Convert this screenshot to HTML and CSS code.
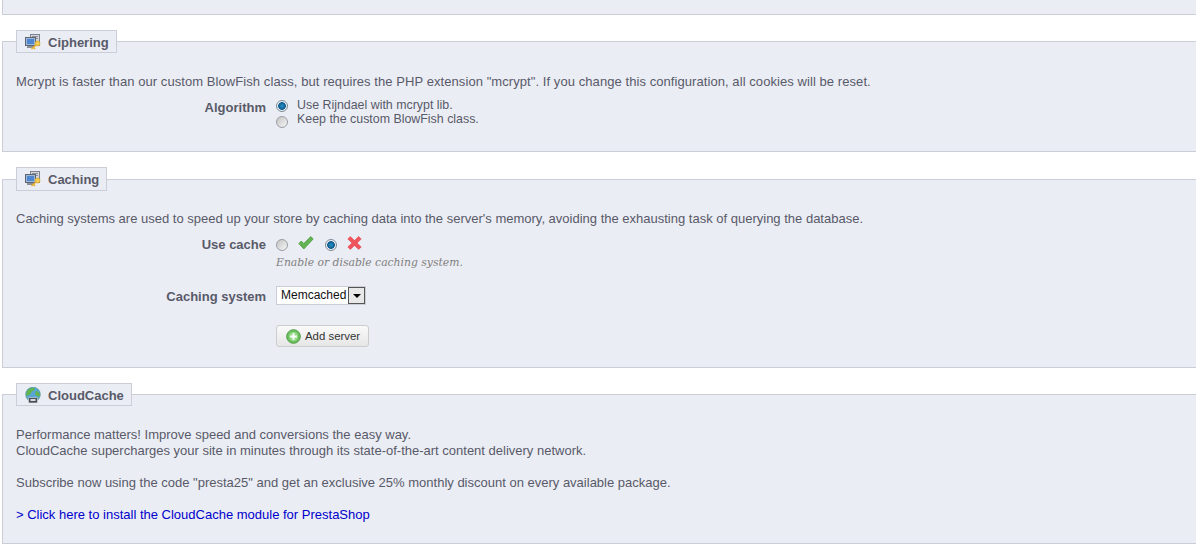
FILE: index.html
```html
<!DOCTYPE html>
<html lang="en">
<head>
    <meta charset="UTF-8">
    <meta name="viewport" content="width=device-width, initial-scale=1.0">
    <title>Performance</title>
    <link rel="stylesheet" href="styles.css">
</head>
<body>
    <div class="panel-stub"></div>

    <fieldset class="panel panel-cipher">
        <legend>
            <svg class="legend-icon" width="16" height="16" viewBox="0 0 16 16">
                <rect x="5.500" y="0.500" width="9" height="11" fill="#d5d7dc" stroke="#7d8290"/>
                <rect x="7" y="2" width="6" height="1" fill="#8a8f9a"/>
                <rect x="7" y="4" width="6" height="1" fill="#8a8f9a"/>
                <rect x="0.500" y="3.500" width="10" height="8" fill="#9fb8da" stroke="#5d6472"/>
                <rect x="2" y="5" width="7" height="5" fill="#4f86d0"/>
                <rect x="2" y="12" width="7" height="2" fill="#8a8f9a"/>
                <circle cx="12.500" cy="9.500" r="2.500" fill="#f5cd50" stroke="#d09a20" stroke-width="0.600"/>
                <path d="M11 11 L6.500 15 M8.500 13.300 L10 15" stroke="#e6b02c" stroke-width="1.600" fill="none"/>
            </svg>
            Ciphering
        </legend>
        <p class="intro intro-cipher">Mcrypt is faster than our custom BlowFish class, but requires the PHP extension "mcrypt". If you change this configuration, all cookies will be reset.</p>
        <div class="form-row">
            <label class="form-label">Algorithm</label>
            <div class="form-field algo-list">
                <div class="radio-line"><span class="radio checked"></span>Use Rijndael with mcrypt lib.</div>
                <div class="radio-line"><span class="radio radio-low"></span>Keep the custom BlowFish class.</div>
            </div>
        </div>
    </fieldset>

    <fieldset class="panel panel-cache">
        <legend>
            <svg class="legend-icon" width="16" height="16" viewBox="0 0 16 16">
                <rect x="5.500" y="0.500" width="9" height="11" fill="#d5d7dc" stroke="#7d8290"/>
                <rect x="7" y="2" width="6" height="1" fill="#8a8f9a"/>
                <rect x="7" y="4" width="6" height="1" fill="#8a8f9a"/>
                <rect x="0.500" y="3.500" width="10" height="8" fill="#9fb8da" stroke="#5d6472"/>
                <rect x="2" y="5" width="7" height="5" fill="#4f86d0"/>
                <rect x="2" y="12" width="7" height="2" fill="#8a8f9a"/>
                <circle cx="12.500" cy="9.500" r="2.500" fill="#f5cd50" stroke="#d09a20" stroke-width="0.600"/>
                <path d="M11 11 L6.500 15 M8.500 13.300 L10 15" stroke="#e6b02c" stroke-width="1.600" fill="none"/>
            </svg>
            Caching
        </legend>
        <p class="intro">Caching systems are used to speed up your store by caching data into the server's memory, avoiding the exhausting task of querying the database.</p>
        <div class="form-row row-use-cache">
            <label class="form-label">Use cache</label>
            <div class="form-field">
                <div class="toggle-line">
                    <span class="radio"></span>
                    <svg class="toggle-icon" width="16" height="14" viewBox="0 0 16 14">
                        <path d="M0.800 7.500 L3.300 5 L5.800 7.500 L12.800 0.600 L15.200 3 L5.800 13 Z" fill="#62b550" stroke="#3f8f38" stroke-width="0.700"/>
                    </svg>
                    <span class="radio checked"></span>
                    <svg class="toggle-icon" width="15" height="14" viewBox="0 0 15 14">
                        <path d="M0.800 3 L3.300 0.600 L7.500 4.500 L11.700 0.600 L14.200 3 L10 7 L14.200 11 L11.700 13.400 L7.500 9.500 L3.300 13.400 L0.800 11 L5 7 Z" fill="#f0545c" stroke="#e0444c" stroke-width="0.600"/>
                    </svg>
                </div>
                <p class="hint">Enable or disable caching system.</p>
            </div>
        </div>
        <div class="form-row row-system">
            <label class="form-label">Caching system</label>
            <div class="form-field">
                <div class="fake-select">
                    <span class="fake-select-value">Memcached</span>
                    <span class="fake-select-arrow"></span>
                </div>
            </div>
        </div>
        <div class="form-row">
            <div class="form-label"></div>
            <div class="form-field">
                <button class="btn-add" type="button">
                    <svg width="15" height="15" viewBox="0 0 16 16">
                        <circle cx="8" cy="8" r="7.300" fill="#6cc05c" stroke="#4b9a48"/>
                        <circle cx="8" cy="8" r="4.800" fill="#97da8a"/>
                        <path d="M8 4.500 V11.500 M4.500 8 H11.500" stroke="#ffffff" stroke-width="2"/>
                    </svg>
                    Add server
                </button>
            </div>
        </div>
    </fieldset>

    <fieldset class="panel panel-cloud">
        <legend>
            <svg class="legend-icon" width="16" height="17" viewBox="0 0 16 17">
                <circle cx="8" cy="7.500" r="7.300" fill="#58a6d8" stroke="#3f8a78" stroke-width="0.600"/>
                <path d="M2 4 C4 1 8 0.500 10 1.500 C9 4 7 4 6 6 C5 8 3 9 1 8.500 Z M11 4 C13 4 15 6 15 9 C13 10 11 9 10 7 Z" fill="#62b54e"/>
                <rect x="3.500" y="10.500" width="9" height="5.500" rx="1" fill="#4a4f55" stroke="#e6e8ee" stroke-width="0.600"/>
                <rect x="5.500" y="12" width="5" height="2" fill="#d8dbe0"/>
            </svg>
            CloudCache
        </legend>
        <p class="intro cloud-text">Performance matters! Improve speed and conversions the easy way.<br>CloudCache supercharges your site in minutes through its state-of-the-art content delivery network.<br><br>Subscribe now using the code "presta25" and get an exclusive 25% monthly discount on every available package.<br><br><a href="#">&gt; Click here to install the CloudCache module for PrestaShop</a></p>
    </fieldset>
</body>
</html>
```

FILE: styles.css
```css
html, body {
    overflow: hidden;
}
body {
    margin: 0;
    padding: 0 0 0 2px;
    height: 551px;
    background-color: #fff;
    font-family: "Liberation Sans", Arial, sans-serif;
    font-size: 13px;
    color: #585a69;
}
.panel-stub {
    height: 14px;
    margin-right: -6px;
    background-color: #ebedf4;
    border-bottom: 1px solid #ccced7;
    border-left: 1px solid #ccced7;
}
.panel {
    margin: 15px -6px 0 0;
    padding: 0 13px;
    background-color: #ebedf4;
    border: 1px solid #ccced7;
    min-inline-size: 0;
    box-sizing: border-box;
}
.panel-cipher {
    height: 122px;
}
.panel-cache {
    height: 201px;
}
.panel-cloud {
    height: 161px;
}
legend {
    display: flex;
    align-items: center;
    height: 24px;
    box-sizing: border-box;
    padding: 0 7px 0 8px;
    background-color: #ebedf4;
    border: 1px solid #ccced7;
    font-weight: bold;
    font-size: 13px;
}
.panel-cipher legend,
.panel-cloud legend {
    height: 23px;
    padding-top: 1px;
}
.legend-icon {
    margin-right: 7px;
}
.intro {
    margin: 0;
    padding-top: 20px;
    line-height: 16px;
}
.intro-cipher {
    padding-top: 21px;
    letter-spacing: 0.07px;
}
.panel-cloud .intro {
    padding-top: 21px;
}
.form-row {
    display: flex;
}
.form-label {
    width: 250px;
    flex-shrink: 0;
    text-align: right;
    font-weight: bold;
    line-height: 16px;
}
.form-field {
    margin-left: 10px;
}
.panel-cipher .form-row {
    margin-top: 10px;
}
.algo-list {
    margin-top: -2px;
    font-size: 12.4px;
}
.radio-line {
    display: flex;
    align-items: flex-start;
    height: 14px;
    line-height: 14px;
}
.radio {
    display: inline-block;
    flex-shrink: 0;
    box-sizing: border-box;
    width: 12px;
    height: 12px;
    margin-top: 2px;
    margin-right: 9px;
    border-radius: 50%;
    border: 1px solid #9a9da3;
    background: linear-gradient(135deg, #c4c4c4, #f6f6f6);
}
.radio-low {
    margin-top: 4px;
}
.radio.checked {
    border-color: #7a8a99;
    background: radial-gradient(circle, #2a93cc 0, #0d5a8c 3.500px, #eef0f2 4.200px);
}
.row-use-cache {
    margin-top: 10px;
}
.toggle-line {
    display: flex;
    align-items: center;
    height: 16px;
}
.toggle-line .radio {
    margin-top: 0;
    margin-right: 10px;
}
.toggle-icon {
    margin-top: -4px;
    margin-right: 11px;
}
.hint {
    margin: 3px 0 0;
    font-family: "DejaVu Serif", Georgia, serif;
    font-style: italic;
    font-size: 10.800px;
    line-height: 14px;
    color: #7f7f7f;
}
.row-system {
    margin-top: 16px;
}
.row-system .form-label {
    padding-top: 3px;
}
.fake-select {
    display: flex;
    width: 90px;
    height: 19px;
    box-sizing: border-box;
    border: 1px solid #ccced7;
    background-color: #fff;
    font-size: 12px;
    color: #111;
}
.fake-select-value {
    flex: 1;
    padding-left: 4px;
    line-height: 16px;
}
.fake-select-arrow {
    position: relative;
    width: 17px;
    box-sizing: border-box;
    border: 1px solid #555;
    background-color: #e8e8e8;
}
.fake-select-arrow::after {
    content: "";
    position: absolute;
    left: 4px;
    top: 6px;
    border: 4px solid transparent;
    border-top-color: #000;
    border-bottom-width: 0;
}
.btn-add {
    display: flex;
    align-items: center;
    gap: 4px;
    width: 93px;
    height: 22px;
    margin-top: 20px;
    padding: 0 0 0 9px;
    border: 1px solid #ccc;
    border-radius: 3px;
    background: linear-gradient(#fafafa, #e6e6e6);
    font-family: "Liberation Sans", Arial, sans-serif;
    font-size: 11.400px;
    color: #333;
}
.cloud-text a {
    color: #0000cc;
    text-decoration: none;
}
```
